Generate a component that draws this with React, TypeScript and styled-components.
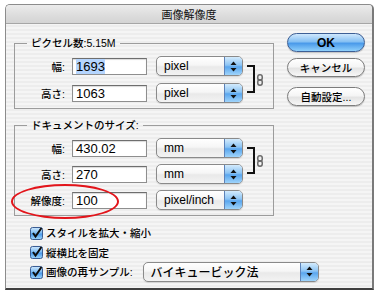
import React from "react";
import styled, { createGlobalStyle } from "styled-components";

const GlobalStyle = createGlobalStyle`
  html, body { margin: 0; padding: 0; background: #ffffff; }
  body { font-family: "Liberation Sans", "Noto Sans CJK JP", sans-serif; }
`;

const JP = `"Liberation Sans", "Noto Sans CJK JP", sans-serif`;

const Window = styled.div`
  position: relative;
  margin: 4px 0 0 5px;
  width: 366px;
  height: 283px;
  border: 1px solid #8c8c8c;
  border-right: 2px solid #7a7a7a;
  border-bottom: 2px solid #404040;
  border-radius: 5px 5px 0 0;
  overflow: hidden;
  display: flex;
  flex-direction: column;
  background: repeating-linear-gradient(to bottom, #ededed 0px, #ededed 2px, #f5f5f5 2px, #f5f5f5 4px);
`;

const TitleBar = styled.div`
  height: 18px;
  flex: none;
  display: flex;
  align-items: center;
  justify-content: center;
  background: linear-gradient(to bottom, #ececec 0%, #dcdcdc 60%, #d4d4d4 100%);
  border-bottom: 1px solid #a6a6a6;
  font-family: ${JP};
  font-size: 11px;
  color: #111;
`;

const Body = styled.div`
  flex: 1;
  display: flex;
  align-items: flex-start;
`;

const LeftCol = styled.div`
  width: 260px;
  padding: 12px 0 0 8px;
  display: flex;
  flex-direction: column;
`;

const RightCol = styled.div`
  margin-left: 13px;
  padding-top: 9px;
  width: 78px;
  display: flex;
  flex-direction: column;
`;

const Group = styled.fieldset<{ $top?: number }>`
  margin: ${(p) => p.$top ?? 0}px 0 0 0;
  padding: 6px 0 5px 0;
  border: 1px solid #9c9c9c;
  border-radius: 0;
  min-width: 0;
`;

const Legend = styled.legend`
  margin-left: 12px;
  padding: 0 4px;
  font-family: ${JP};
  font-size: 10.5px;
  font-weight: 500;
  line-height: 14px;
  color: #000;
`;

const Rows = styled.div<{ $gap: number }>`
  display: grid;
  grid-template-columns: 50px 82px 96px 12px 10px;
  column-gap: 0;
  row-gap: ${(p) => p.$gap}px;
  align-items: center;
`;

const Label = styled.div`
  grid-column: 1;
  text-align: right;
  font-family: ${JP};
  font-size: 10.5px;
  font-weight: 500;
  color: #000;
  position: relative;
  z-index: 1;
`;

const Field = styled.div`
  grid-column: 2;
  margin-left: 7px;
  height: 17px;
  width: 75px;
  box-sizing: border-box;
  background: #fff;
  border: 1px solid #8e8e8e;
  border-top-color: #6e6e6e;
  box-shadow: inset 0 1px 1px rgba(0, 0, 0, 0.15);
  display: flex;
  align-items: center;
  padding-left: 3px;
  font-family: "Liberation Sans", sans-serif;
  font-size: 13px;
  color: #000;
`;

const Selected = styled.span`
  background: #b5d5fe;
  line-height: 15px;
`;

const Popup = styled.div<{ $w: number; $ml: number }>`
  flex: none;
  margin-left: ${(p) => p.$ml}px;
  width: ${(p) => p.$w}px;
  height: 20px;
  box-sizing: border-box;
  border: 1px solid #8a8a8a;
  border-radius: 5px;
  background: linear-gradient(to bottom, #ffffff 0%, #f6f6f6 45%, #e9e9e9 55%, #f3f3f3 100%);
  box-shadow: 0 1px 1px rgba(0, 0, 0, 0.12);
  display: flex;
  align-items: stretch;
  overflow: hidden;
`;

const PopupText = styled.div`
  flex: 1;
  display: flex;
  align-items: center;
  padding-left: 7px;
  font-family: ${JP};
  font-size: 12px;
  font-weight: 500;
  color: #000;
  white-space: nowrap;
`;

const PopupArrows = styled.div`
  width: 17px;
  flex: none;
  border-left: 1px solid #5d82b8;
  background: linear-gradient(to bottom, #d3ebfd 0%, #8cc4f4 45%, #5aa6ee 55%, #9fd4fb 100%);
  display: flex;
  align-items: center;
  justify-content: center;
`;

const Bracket = styled.div<{ $row: string }>`
  grid-column: 4;
  grid-row: ${(p) => p.$row};
  align-self: stretch;
  margin: 9px 0 10px 4px;
  width: 6px;
  border: 2px solid #111;
  border-left: none;
`;

const Link = styled.div<{ $row: string }>`
  grid-column: 5;
  grid-row: ${(p) => p.$row};
  display: flex;
  align-items: center;
  justify-content: center;
`;

const Checks = styled.div`
  margin-top: 7px;
  padding-left: 16px;
  display: flex;
  flex-direction: column;
`;

const CheckRow = styled.div`
  height: 19.5px;
  display: flex;
  align-items: center;
  gap: 2px;
  font-family: ${JP};
  font-size: 10.5px;
  font-weight: 500;
  color: #000;
  white-space: nowrap;
`;

const Box = styled.span`
  flex: none;
  width: 14px;
  height: 14px;
  display: inline-flex;
`;

const Button = styled.div<{ $primary?: boolean; $mt: number }>`
  margin-top: ${(p) => p.$mt}px;
  height: 19px;
  box-sizing: border-box;
  border-radius: 10px;
  border: 1px solid ${(p) => (p.$primary ? "#3d5f95" : "#7c7c7c")};
  background: ${(p) =>
    p.$primary
      ? "linear-gradient(to bottom, #cfe8fd 0%, #86c0f3 45%, #4a9aea 55%, #8fd0fb 100%)"
      : "linear-gradient(to bottom, #ffffff 0%, #f5f5f5 45%, #e4e4e4 55%, #f7f7f7 100%)"};
  box-shadow: 0 1px 1px rgba(0, 0, 0, 0.2);
  display: flex;
  align-items: center;
  justify-content: center;
  font-family: ${JP};
  font-size: ${(p) => (p.$primary ? "12px" : "10.5px")};
  font-weight: ${(p) => (p.$primary ? 700 : 500)};
  color: #000;
`;

const Ellipse = styled.div`
  position: absolute;
  left: 5px;
  top: 179px;
  width: 108px;
  height: 35px;
  box-sizing: border-box;
  border: 2px solid #e2151b;
  border-radius: 50%;
  pointer-events: none;
`;

const Arrows = () => (
  <svg width="7" height="11" viewBox="0 0 7 11">
    <path d="M3.5 0.5 L6.5 4 L0.5 4 Z" fill="#111" />
    <path d="M3.5 10.5 L6.5 7 L0.5 7 Z" fill="#111" />
  </svg>
);

const ChainIcon = () => (
  <svg width="6" height="12" viewBox="0 0 6 12">
    <rect x="0.75" y="0.75" width="4.5" height="5.5" rx="2.2" fill="none" stroke="#6a6a6a" strokeWidth="1.5" />
    <rect x="0.75" y="5.75" width="4.5" height="5.5" rx="2.2" fill="none" stroke="#6a6a6a" strokeWidth="1.5" />
  </svg>
);

const CheckBox = () => (
  <Box>
    <svg width="14" height="14" viewBox="0 0 14 14">
      <defs>
        <linearGradient id="cbg" x1="0" y1="0" x2="0" y2="1">
          <stop offset="0" stopColor="#cfe8fd" />
          <stop offset="0.45" stopColor="#7fbcf2" />
          <stop offset="0.55" stopColor="#4b9aea" />
          <stop offset="1" stopColor="#9fd6fb" />
        </linearGradient>
      </defs>
      <rect x="0.5" y="1.5" width="12" height="12" rx="2" fill="url(#cbg)" stroke="#3b5d93" />
      <path d="M3 7 L5.5 10.5 L11.5 2" fill="none" stroke="#0d0d0d" strokeWidth="2" />
    </svg>
  </Box>
);

const Select = ({ text, w = 87, ml = 9 }: { text: string; w?: number; ml?: number }) => (
  <Popup $w={w} $ml={ml}>
    <PopupText>{text}</PopupText>
    <PopupArrows>
      <Arrows />
    </PopupArrows>
  </Popup>
);

export default function App() {
  return (
    <>
      <GlobalStyle />
      <Window>
        <TitleBar>画像解像度</TitleBar>
        <Body>
          <LeftCol>
            <Group>
              <Legend>ピクセル数:5.15M</Legend>
              <Rows $gap={7}>
                <Label>幅:</Label>
                <Field>
                  <Selected>1693</Selected>
                </Field>
                <Select text="pixel" />
                <Label>高さ:</Label>
                <Field>1063</Field>
                <Select text="pixel" />
                <Bracket $row="1 / 3" />
                <Link $row="1 / 3">
                  <ChainIcon />
                </Link>
              </Rows>
            </Group>
            <Group $top={9}>
              <Legend>ドキュメントのサイズ:</Legend>
              <Rows $gap={6}>
                <Label>幅:</Label>
                <Field>430.02</Field>
                <Select text="mm" />
                <Label>高さ:</Label>
                <Field>270</Field>
                <Select text="mm" />
                <Label>解像度:</Label>
                <Field>100</Field>
                <Select text="pixel/inch" />
                <Bracket $row="1 / 3" />
                <Link $row="1 / 3">
                  <ChainIcon />
                </Link>
              </Rows>
            </Group>
            <Checks>
              <CheckRow>
                <CheckBox />
                スタイルを拡大・縮小
              </CheckRow>
              <CheckRow>
                <CheckBox />
                縦横比を固定
              </CheckRow>
              <CheckRow>
                <CheckBox />
                画像の再サンプル:
                <Select text="バイキュービック法" w={176} ml={8} />
              </CheckRow>
            </Checks>
          </LeftCol>
          <RightCol>
            <Button $primary $mt={0}>OK</Button>
            <Button $mt={6}>キャンセル</Button>
            <Button $mt={10}>自動設定...</Button>
          </RightCol>
        </Body>
        <Ellipse />
      </Window>
    </>
  );
}
